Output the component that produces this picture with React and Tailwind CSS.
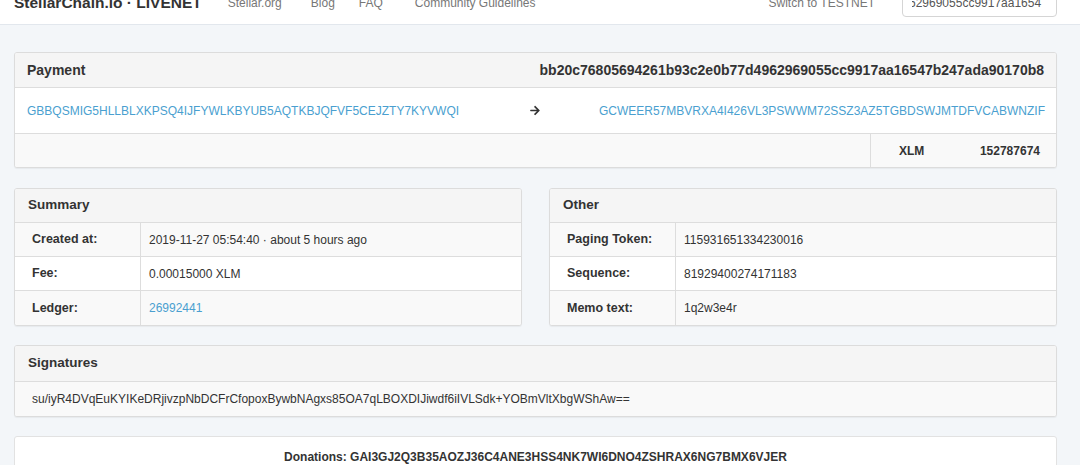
import React from "react";

const HASH = "bb20c76805694261b93c2e0b77d4962969055cc9917aa16547b247ada90170b8";
const FROM = "GBBQSMIG5HLLBLXKPSQ4IJFYWLKBYUB5AQTKBJQFVF5CEJZTY7KYVWQI";
const TO = "GCWEER57MBVRXA4I426VL3PSWWM72SSZ3AZ5TGBDSWJMTDFVCABWNZIF";

const summaryRows = [
  { label: "Created at:", value: "2019-11-27 05:54:40 · about 5 hours ago" },
  { label: "Fee:", value: "0.00015000 XLM" },
  { label: "Ledger:", value: "26992441", link: true },
];

const otherRows = [
  { label: "Paging Token:", value: "115931651334230016" },
  { label: "Sequence:", value: "81929400274171183" },
  { label: "Memo text:", value: "1q2w3e4r" },
];

function ArrowIcon() {
  return (
    <svg viewBox="0 0 448 512" className="w-[10px] h-[11px] fill-[#333]">
      <path d="M190.5 66.9l22.2-22.2c9.4-9.4 24.6-9.4 33.9 0L441 239c9.4 9.4 9.4 24.6 0 33.9L246.6 467.3c-9.4 9.4-24.6 9.4-33.9 0l-22.2-22.2c-9.5-9.5-9.3-25 .4-34.3L311.4 296H24c-13.3 0-24-10.7-24-24v-32c0-13.3 10.7-24 24-24h287.4L190.9 101.2c-9.8-9.3-10-24.8-.4-34.3z" />
    </svg>
  );
}

function InfoTable({ title, rows }) {
  return (
    <div className="w-[508px] bg-white border border-[#dcdcdc] rounded-[3px] shadow-[0_1px_1px_rgba(0,0,0,0.05)] overflow-hidden">
      <div className="h-[34px] flex items-center px-[13px] bg-[#f5f5f5] border-b border-[#dddddd] text-[13.5px] font-bold text-[#333]">
        {title}
      </div>
      {rows.map((row, i) => (
        <div
          key={row.label}
          className={`h-[34px] flex items-center text-[12px] ${
            i % 2 === 0 ? "bg-[#f9f9f9]" : "bg-white"
          } ${i < rows.length - 1 ? "border-b border-[#dddddd]" : ""}`}
        >
          <div className="w-[126px] h-full flex items-center pl-[17px] border-r border-[#dddddd] font-bold text-[12.5px] text-[#333]">
            {row.label}
          </div>
          <div className={`pl-[8px] ${row.link ? "text-[#4a9fd0]" : "text-[#333]"}`}>
            {row.value}
          </div>
        </div>
      ))}
    </div>
  );
}

export default function App() {
  return (
    <div className="min-h-screen bg-[#f3f6f9] font-['Liberation_Sans',Arial,sans-serif] text-[#333] overflow-hidden">
      {/* NAVBAR (page scrolled a bit) */}
      <div className="-mt-[18px] h-[43px] bg-white border-b border-[#e2e7ed] flex items-center pl-[14px] pr-[23px]">
        <div className="font-bold text-[15.5px] text-[#333]">StellarChain.io · LIVENET</div>
        <div className="flex items-center ml-[26px] text-[12px] text-[#777]">
          <span>Stellar.org</span>
          <span className="ml-[29px]">Blog</span>
          <span className="ml-[24px]">FAQ</span>
          <span className="ml-[32px]">Community Guidelines</span>
        </div>
        <div className="ml-auto flex items-center text-[12px] text-[#777]">
          <span className="mr-[27px]">Switch to TESTNET</span>
          <div className="w-[155px] h-[28px] border border-[#d5d5d5] rounded-[4px] bg-white px-[9px] flex items-center text-[#555]">
            <div className="w-full min-w-0 overflow-hidden whitespace-nowrap">
              <span className="-ml-[3px] inline-block">62969055cc9917aa1654</span>
            </div>
          </div>
        </div>
      </div>

      <div className="px-[14px] pt-[27px] w-[1071px]">
        {/* PAYMENT */}
        <div className="bg-white border border-[#dcdcdc] rounded-[3px] shadow-[0_1px_1px_rgba(0,0,0,0.05)] overflow-hidden">
          <div className="h-[35px] flex items-center justify-between px-[12px] bg-[#f5f5f5] border-b border-[#dddddd] text-[14px] font-bold text-[#333]">
            <span>Payment</span>
            <span>{HASH}</span>
          </div>
          <div className="h-[46px] flex items-center text-[12px] border-b border-[#dddddd]">
            <div className="w-[505px] pl-[12px] text-[#4a9fd0]">{FROM}</div>
            <div className="w-[30px] flex justify-center">
              <ArrowIcon />
            </div>
            <div className="flex-1 text-right pr-[11px] text-[#4a9fd0]">{TO}</div>
          </div>
          <div className="h-[33px] flex bg-[#f9f9f9] text-[12px] font-bold text-[#333]">
            <div className="flex-1" />
            <div className="w-[186px] border-l border-[#dddddd] flex items-center pl-[28px] pr-[16px]">
              <span>XLM</span>
              <span className="ml-auto">152787674</span>
            </div>
          </div>
        </div>

        {/* SUMMARY + OTHER */}
        <div className="flex gap-[27px] mt-[20px]">
          <InfoTable title="Summary" rows={summaryRows} />
          <InfoTable title="Other" rows={otherRows} />
        </div>

        {/* SIGNATURES */}
        <div className="mt-[19px] bg-white border border-[#dcdcdc] rounded-[3px] shadow-[0_1px_1px_rgba(0,0,0,0.05)] overflow-hidden">
          <div className="h-[36px] flex items-center px-[13px] bg-[#f5f5f5] border-b border-[#dddddd] text-[13.5px] font-bold text-[#333]">
            Signatures
          </div>
          <div className="h-[34px] flex items-center pl-[17px] bg-[#f9f9f9] text-[12px] text-[#333]">
            su/iyR4DVqEuKYIKeDRjivzpNbDCFrCfopoxBywbNAgxs85OA7qLBOXDIJiwdf6iIVLSdk+YOBmVltXbgWShAw==
          </div>
        </div>

        {/* DONATIONS */}
        <div className="mt-[19px] bg-white border border-[#e2e2e2] rounded-[3px] h-[60px] pt-[11px] text-center text-[12px] font-bold text-[#333]">
          Donations: GAI3GJ2Q3B35AOZJ36C4ANE3HSS4NK7WI6DNO4ZSHRAX6NG7BMX6VJER
        </div>
      </div>
    </div>
  );
}
